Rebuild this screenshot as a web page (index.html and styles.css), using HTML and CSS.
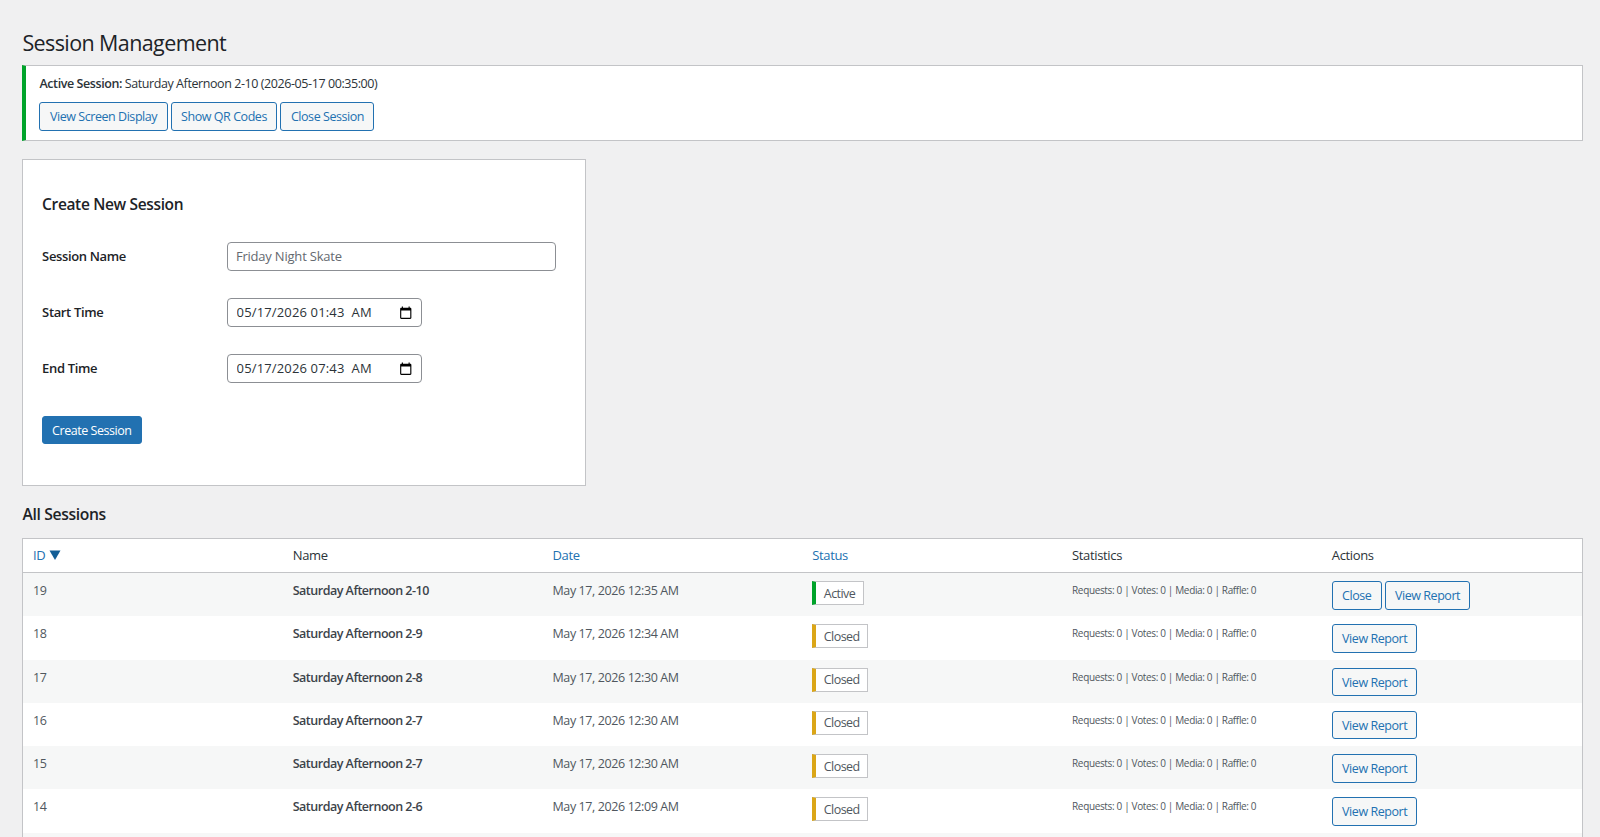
FILE: index.html
```html
<!DOCTYPE html>
<html lang="en">
<head>
<meta charset="utf-8">
<title>Session Management</title>
<link rel="stylesheet" href="styles.css">
</head>
<body>
<div class="wrap">
  <h1 class="page-title">Session Management</h1>
  <div class="notice">
    <p class="notice-text"><strong>Active Session:</strong> Saturday Afternoon 2-10 (2026-05-17 00:35:00)</p>
    <div class="notice-actions">
      <a class="button" href="#">View Screen Display</a>
      <a class="button" href="#">Show QR Codes</a>
      <a class="button" href="#">Close Session</a>
    </div>
  </div>
  <form class="card">
    <h2 class="card-title">Create New Session</h2>
    <div class="field">
      <label class="field-label" for="name">Session Name</label>
      <input class="input input-text" id="name" type="text" placeholder="Friday Night Skate">
    </div>
    <div class="field">
      <label class="field-label" for="start">Start Time</label>
      <div class="input input-date">
        <input class="date-value" id="start" type="text" value="05/17/2026 01:43  AM">
        <svg class="calendar" viewBox="0 0 24 24" aria-hidden="true"><path d="M20 3h-1V1h-2v2H7V1H5v2H4c-1.1 0-2 .9-2 2v16c0 1.1.9 2 2 2h16c1.1 0 2-.9 2-2V5c0-1.100-.9-2-2-2zm0 18H4V8h16v13z"/></svg>
      </div>
    </div>
    <div class="field">
      <label class="field-label" for="end">End Time</label>
      <div class="input input-date">
        <input class="date-value" id="end" type="text" value="05/17/2026 07:43  AM">
        <svg class="calendar" viewBox="0 0 24 24" aria-hidden="true"><path d="M20 3h-1V1h-2v2H7V1H5v2H4c-1.1 0-2 .9-2 2v16c0 1.1.9 2 2 2h16c1.1 0 2-.9 2-2V5c0-1.100-.9-2-2-2zm0 18H4V8h16v13z"/></svg>
      </div>
    </div>
    <button class="button button-primary" type="button">Create Session</button>
  </form>
  <h2 class="section-title">All Sessions</h2>
  <table class="sessions">
    <thead>
      <tr>
        <th><a href="#">ID</a> <svg class="sort" viewBox="0 0 12 10" aria-hidden="true"><path d="M0.5 0.5h11L6 10z"/></svg></th>
        <th>Name</th>
        <th><a href="#">Date</a></th>
        <th><a href="#">Status</a></th>
        <th>Statistics</th>
        <th>Actions</th>
      </tr>
    </thead>
    <tbody>
      <tr>
        <td>19</td><td class="name">Saturday Afternoon 2-10</td><td>May 17, 2026 12:35 AM</td>
        <td><span class="badge badge-active">Active</span></td>
        <td class="stats">Requests: 0 | Votes: 0 | Media: 0 | Raffle: 0</td>
        <td class="actions"><a class="button" href="#">Close</a><a class="button" href="#">View Report</a></td>
      </tr>
      <tr>
        <td>18</td><td class="name">Saturday Afternoon 2-9</td><td>May 17, 2026 12:34 AM</td>
        <td><span class="badge">Closed</span></td>
        <td class="stats">Requests: 0 | Votes: 0 | Media: 0 | Raffle: 0</td>
        <td class="actions"><a class="button" href="#">View Report</a></td>
      </tr>
      <tr>
        <td>17</td><td class="name">Saturday Afternoon 2-8</td><td>May 17, 2026 12:30 AM</td>
        <td><span class="badge">Closed</span></td>
        <td class="stats">Requests: 0 | Votes: 0 | Media: 0 | Raffle: 0</td>
        <td class="actions"><a class="button" href="#">View Report</a></td>
      </tr>
      <tr>
        <td>16</td><td class="name">Saturday Afternoon 2-7</td><td>May 17, 2026 12:30 AM</td>
        <td><span class="badge">Closed</span></td>
        <td class="stats">Requests: 0 | Votes: 0 | Media: 0 | Raffle: 0</td>
        <td class="actions"><a class="button" href="#">View Report</a></td>
      </tr>
      <tr>
        <td>15</td><td class="name">Saturday Afternoon 2-7</td><td>May 17, 2026 12:30 AM</td>
        <td><span class="badge">Closed</span></td>
        <td class="stats">Requests: 0 | Votes: 0 | Media: 0 | Raffle: 0</td>
        <td class="actions"><a class="button" href="#">View Report</a></td>
      </tr>
      <tr>
        <td>14</td><td class="name">Saturday Afternoon 2-6</td><td>May 17, 2026 12:09 AM</td>
        <td><span class="badge">Closed</span></td>
        <td class="stats">Requests: 0 | Votes: 0 | Media: 0 | Raffle: 0</td>
        <td class="actions"><a class="button" href="#">View Report</a></td>
      </tr>
      <tr>
        <td></td><td class="name"></td><td></td><td></td><td></td><td></td>
      </tr>
    </tbody>
  </table>
</div>
</body>
</html>
```
FILE: styles.css
```css
* { box-sizing: border-box; }
html, body { margin: 0; height: 837px; overflow: hidden; }
body {
  background: #f0f0f1;
  color: #2c3338;
  font-family: "Open Sans", "Liberation Sans", sans-serif;
  font-size: 13px;
  line-height: 1.4;
  letter-spacing: -0.35px;
}
a { color: #2271b1; text-decoration: none; }
.wrap { padding: 29px 17px 0 22.4px; }
.page-title {
  margin: 0 0 9px;
  font-size: 21.5px;
  font-weight: 400;
  line-height: 27px;
  color: #1d2327;
  letter-spacing: -0.6px;
}
.notice {
  height: 76px;
  padding: 9px 14px 0 13.1px;
  background: #fff;
  border: 1px solid #c3c4c7;
  border-left: 4px solid #00a32a;
}
.notice-text { margin: 0 0 9px; font-size: 12.5px; line-height: 18px; color: #2c3338; letter-spacing: -0.42px; }
.notice-text strong { font-weight: 600; }
.notice-actions { display: flex; gap: 3px; }
.button {
  display: inline-block;
  height: 28.5px;
  padding: 0 9.5px;
  font: inherit;
  font-size: 12.5px;
  line-height: 27.5px;
  letter-spacing: -0.45px;
  color: #2271b1;
  background: #f6f7f7;
  border: 1px solid #2271b1;
  border-radius: 3px;
  white-space: nowrap;
}
.card {
  width: 563.6px;
  height: 327px;
  margin-top: 18px;
  padding: 0 18.7px;
  background: #fff;
  border: 1px solid #c3c4c7;
}
.card-title {
  margin: 33px 0 27px;
  font-size: 15.5px;
  font-weight: 600;
  line-height: 22px;
  color: #1d2327;
}
.field { display: flex; align-items: center; margin-bottom: 27.5px; height: 28.5px; }
.field-label {
  width: 184.8px;
  flex: none;
  font-weight: 600;
  font-size: 13px;
  color: #1d2327;
}
.input {
  height: 28.5px;
  padding: 0 8px;
  font: inherit;
  font-size: 13px;
  letter-spacing: -0.2px;
  color: #2c3338;
  background: #fff;
  border: 1px solid #8c8f94;
  border-radius: 4px;
}
.input::placeholder { color: #646970; opacity: 1; }
.input-text { width: 329px; }
.input-date {
  display: flex;
  align-items: center;
  width: 195.5px;
  padding: 0 9px 0 8.7px;
}
.date-value {
  flex: 1;
  min-width: 0;
  padding: 0;
  border: 0;
  outline: 0;
  background: transparent;
  font: inherit;
  color: #2c3338;
  letter-spacing: 0.15px;
}
.calendar { flex: none; width: 13.5px; height: 13.5px; fill: #000; }
.button-primary {
  display: block;
  margin-top: 33px;
  padding: 0 9px;
  color: #fff;
  background: #2271b1;
  border-color: #2271b1;
  cursor: pointer;
}
.section-title {
  margin: 17px 0 13px;
  font-size: 15.7px;
  font-weight: 600;
  line-height: 22px;
  color: #1d2327;
}
.sessions {
  width: 100%;
  table-layout: fixed;
  border-collapse: separate;
  border-spacing: 0;
  background: #fff;
  border: 1px solid #c3c4c7;
}
.sessions th {
  height: 34px;
  padding: 0 10px 0 9.6px;
  text-align: left;
  font-weight: 400;
  font-size: 13px;
  color: #2c3338;
  border-bottom: 1px solid #c3c4c7;
}
.sort { width: 12px; height: 10px; fill: #135e96; margin-left: 1px; }
.sessions td {
  height: 43.25px;
  padding: 8px 10px 0 9.6px;
  vertical-align: top;
  font-size: 12.5px;
  line-height: 19px;
  letter-spacing: -0.4px;
  color: #50575e;
}
.sessions tbody tr:nth-child(odd) { background: #f6f7f7; }
.sessions td.name { font-weight: 600; color: #3c434a; letter-spacing: -0.5px; }
.sessions td.stats { font-size: 10px; letter-spacing: -0.35px; }
.actions .button { margin-right: 3px; padding: 0 9.3px; }
.badge {
  display: inline-block;
  padding: 1.5px 7.5px;
  background: #fff;
  border: 1px solid #c3c4c7;
  border-left: 4px solid #dba617;
  letter-spacing: -0.55px;
}
.badge-active { border-left-color: #00a32a; }
```
